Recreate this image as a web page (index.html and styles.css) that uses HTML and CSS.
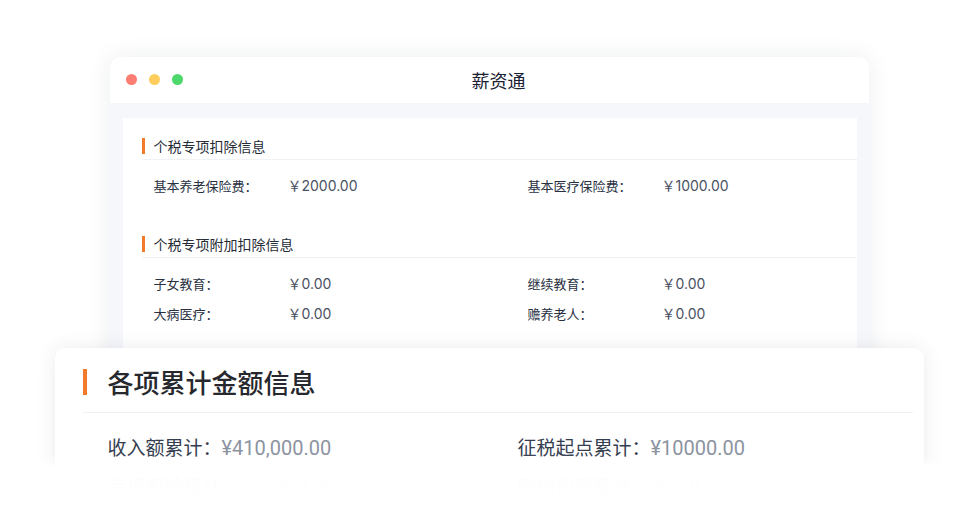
FILE: index.html
```html
<!DOCTYPE html>
<html lang="zh-CN">
<head>
    <meta charset="UTF-8">
    <meta name="viewport" content="width=device-width, initial-scale=1.0">
    <title>薪资通</title>
    <link rel="stylesheet" href="styles.css">
</head>
<body>
    <div class="palco">
        <div class="janela">
            <div class="barra-titulo">
                <div class="botoes">
                    <span class="bola vermelha"></span>
                    <span class="bola amarela"></span>
                    <span class="bola verde"></span>
                </div>
                <div class="titulo">薪资通</div>
            </div>
            <div class="corpo">
                <div class="cartao">
                    <div class="secao-titulo">个税专项扣除信息</div>
                    <div class="linhas">
                        <div class="item"><span class="rotulo">基本养老保险费：</span><span class="valor">￥2000.00</span></div>
                        <div class="item"><span class="rotulo">基本医疗保险费：</span><span class="valor">￥1000.00</span></div>
                    </div>

                    <div class="secao-titulo segunda">个税专项附加扣除信息</div>
                    <div class="linhas">
                        <div class="item"><span class="rotulo">子女教育：</span><span class="valor">￥0.00</span></div>
                        <div class="item"><span class="rotulo">继续教育：</span><span class="valor">￥0.00</span></div>
                        <div class="item"><span class="rotulo">大病医疗：</span><span class="valor">￥0.00</span></div>
                        <div class="item"><span class="rotulo">赡养老人：</span><span class="valor">￥0.00</span></div>
                    </div>
                </div>
            </div>
        </div>

        <div class="painel">
            <div class="painel-titulo">各项累计金额信息</div>
            <div class="painel-linhas">
                <div class="painel-item"><span class="p-rotulo">收入额累计：</span><span class="p-valor">¥410,000.00</span></div>
                <div class="painel-item"><span class="p-rotulo">征税起点累计：</span><span class="p-valor">¥10000.00</span></div>
                <div class="painel-item"><span class="p-rotulo">专项扣除累计：</span><span class="p-valor">¥36000.00</span></div>
                <div class="painel-item"><span class="p-rotulo">附加扣除累计：</span><span class="p-valor">¥0.00</span></div>
            </div>
        </div>
    </div>

    <div class="esmaecer"></div>
</body>
</html>
```

FILE: styles.css
```css
html, body {
    margin: 0;
    height: 100%;
    overflow: hidden;
}
body {
    background-color: #fff;
    font-family: "Noto Sans CJK SC", "Noto Sans", sans-serif;
    position: relative;
}
.palco {
    display: flex;
    flex-direction: column;
    align-items: center;
    padding-top: 57px;
}
.janela {
    width: 759px;
    height: 380px;
    background-color: #f5f7fb;
    border-radius: 10px;
    box-shadow: 0 0 24px rgba(30, 40, 70, 0.08);
    overflow: hidden;
}
.barra-titulo {
    position: relative;
    height: 46px;
    background-color: #fff;
    display: flex;
    align-items: center;
    justify-content: center;
}
.botoes {
    position: absolute;
    left: 16px;
    top: 17px;
    display: flex;
    gap: 12px;
}
.bola {
    width: 11px;
    height: 11px;
    border-radius: 50%;
}
.vermelha { background-color: #fe7d72; }
.amarela { background-color: #fecd5b; }
.verde { background-color: #4cd86a; }
.titulo {
    font-size: 18px;
    color: #1a2133;
    margin-left: 19px;
}
.corpo {
    padding: 15px 12px 0 13px;
}
.cartao {
    background-color: #fff;
    height: 400px;
    padding: 18px 0 0 19px;
}
.secao-titulo {
    font-size: 14px;
    line-height: 20px;
    color: #262b36;
    padding-left: 12px;
    padding-bottom: 3px;
    border-bottom: 1px solid #f1f2f5;
    position: relative;
}
.secao-titulo::before {
    content: "";
    position: absolute;
    left: 0;
    top: 2px;
    width: 3px;
    height: 16px;
    background-color: #f17a2b;
}
.secao-titulo.segunda {
    margin-top: 38px;
}
.linhas {
    display: grid;
    grid-template-columns: 374px 1fr;
    row-gap: 10px;
    padding: 16px 0 0 12px;
}
.item {
    font-size: 13px;
    line-height: 20px;
    display: flex;
}
.rotulo {
    width: 134px;
    color: #283042;
}
.valor {
    font-family: "Inter", "Noto Sans CJK SC", sans-serif;
    font-size: 14px;
    color: #4a5162;
}
.painel {
    width: 869px;
    margin-top: -89px;
    background-color: #fff;
    border-radius: 10px;
    box-shadow: 0 0 20px rgba(30, 40, 70, 0.09);
    padding: 21px 11px 0 28px;
    box-sizing: border-box;
    height: 200px;
}
.painel-titulo {
    font-size: 26px;
    line-height: 26px;
    font-weight: 500;
    color: #26282e;
    padding-left: 25px;
    padding-bottom: 17px;
    border-bottom: 1px solid #eff0f3;
    position: relative;
}
.painel-titulo::before {
    content: "";
    position: absolute;
    left: 0;
    top: 0;
    width: 4px;
    height: 26px;
    background-color: #f17a2b;
}
.painel-linhas {
    display: grid;
    grid-template-columns: 410px 1fr;
    row-gap: 12px;
    padding: 21px 0 0 25px;
}
.painel-item {
    font-size: 19px;
    line-height: 26px;
}
.p-rotulo {
    color: #353d50;
}
.p-valor {
    font-family: "Roboto", "Noto Sans", sans-serif;
    font-size: 20px;
    color: #8c93a1;
}
.esmaecer {
    position: absolute;
    left: 0;
    right: 0;
    top: 455px;
    bottom: 0;
    background: linear-gradient(to bottom, rgba(255, 255, 255, 0) 0, rgba(255, 255, 255, 0.96) 12px, rgba(255, 255, 255, 0.99) 26px, #fff 50px);
}
```
